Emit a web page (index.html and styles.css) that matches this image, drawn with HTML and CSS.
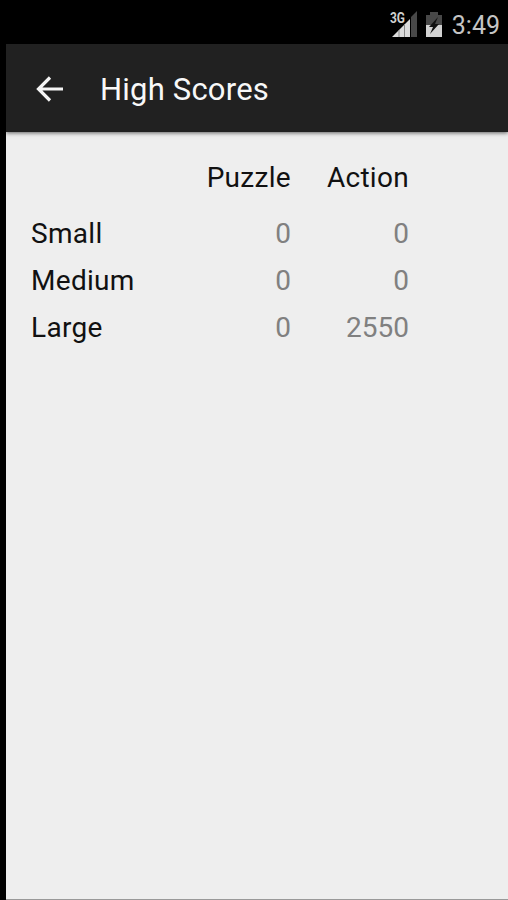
FILE: index.html
```html
<!DOCTYPE html>
<html lang="en">
<head>
    <meta charset="UTF-8">
    <meta name="viewport" content="width=device-width, initial-scale=1.0">
    <title>High Scores</title>
    <link rel="stylesheet" href="styles.css">
</head>
<body>
    <div class="status-bar">
        <svg class="signal" width="28" height="28" viewBox="0 0 28 28">
            <path d="M21 6L27 0V26H21Z" fill="#484848"/>
            <path d="M2 26L20 8V26Z" fill="#dcdcdc"/>
            <path d="M9 19V26M14.500 13V26" stroke="#888" stroke-width="1"/>
            <text x="0" y="12" textLength="15" lengthAdjust="spacingAndGlyphs" class="network">3G</text>
        </svg>
        <svg class="battery" width="18" height="26" viewBox="0 0 18 26">
            <path d="M1 3H5V0H13V3H17V13H1Z" fill="#484848"/>
            <path d="M1 13H17V25H1Z" fill="#d2d2d2"/>
            <path d="M13 5L4 15H8L5 22L14 12H10Z" fill="#111"/>
        </svg>
        <span class="clock">3:49</span>
    </div>

    <div class="screen">
        <header class="app-bar">
            <svg class="back" width="28" height="28" viewBox="0 0 28 28">
                <path d="M27 14H3M14 2.500L2.500 14L14 25.500" fill="none" stroke="#f5f5f5" stroke-width="3.200"/>
            </svg>
            <h1>High Scores</h1>
        </header>

        <main class="scores">
            <table>
                <thead>
                    <tr>
                        <th></th>
                        <th>Puzzle</th>
                        <th>Action</th>
                    </tr>
                </thead>
                <tbody>
                    <tr>
                        <th>Small</th>
                        <td>0</td>
                        <td>0</td>
                    </tr>
                    <tr>
                        <th>Medium</th>
                        <td>0</td>
                        <td>0</td>
                    </tr>
                    <tr>
                        <th>Large</th>
                        <td>0</td>
                        <td>2550</td>
                    </tr>
                </tbody>
            </table>
        </main>
    </div>
</body>
</html>
```
FILE: styles.css
```css
* {
    box-sizing: border-box;
}

body {
    margin: 0;
    height: 100vh;
    display: flex;
    flex-direction: column;
    overflow: hidden;
    background: #000;
    font-family: Roboto, sans-serif;
}

.status-bar {
    height: 44px;
    flex-shrink: 0;
    display: flex;
    align-items: center;
    justify-content: flex-end;
    padding: 5px 8px 0 0;
    color: #c4c4c4;
}

.signal {
    overflow: visible;
    margin-right: 7px;
}

.network {
    font-size: 14px;
    font-weight: 700;
    fill: #d0d0d0;
    stroke: #000;
    stroke-width: 2px;
    paint-order: stroke;
}

.battery {
    margin-right: 9px;
}

.clock {
    font-size: 25px;
    line-height: 32px;
    margin-top: 3px;
}

.screen {
    flex: 1;
    margin-left: 6px;
    background: #eee;
    border-bottom: 1px solid #999;
}

.app-bar {
    height: 88px;
    display: flex;
    align-items: center;
    padding-left: 30px;
    background: #212121;
    box-shadow: 0 1px 4px rgba(0, 0, 0, 0.6);
}

.back {
    margin-top: 1px;
}

.app-bar h1 {
    margin: 3px 0 0 36px;
    color: #f8f8f8;
    font-size: 31px;
    font-weight: 400;
    letter-spacing: 0.2px;
}

.scores {
    padding: 22px 25px;
}

table {
    table-layout: fixed;
    width: 378px;
    border-collapse: collapse;
    font-size: 28px;
}

th,
td {
    height: 47px;
    padding: 0;
    text-align: right;
    font-weight: 400;
    line-height: 33px;
}

th {
    color: #111;
    letter-spacing: 0.3px;
}

td {
    color: #808080;
}

thead th {
    height: 56px;
    padding-bottom: 9px;
}

thead th:first-child {
    width: 142px;
}

tbody th {
    text-align: left;
}
```
